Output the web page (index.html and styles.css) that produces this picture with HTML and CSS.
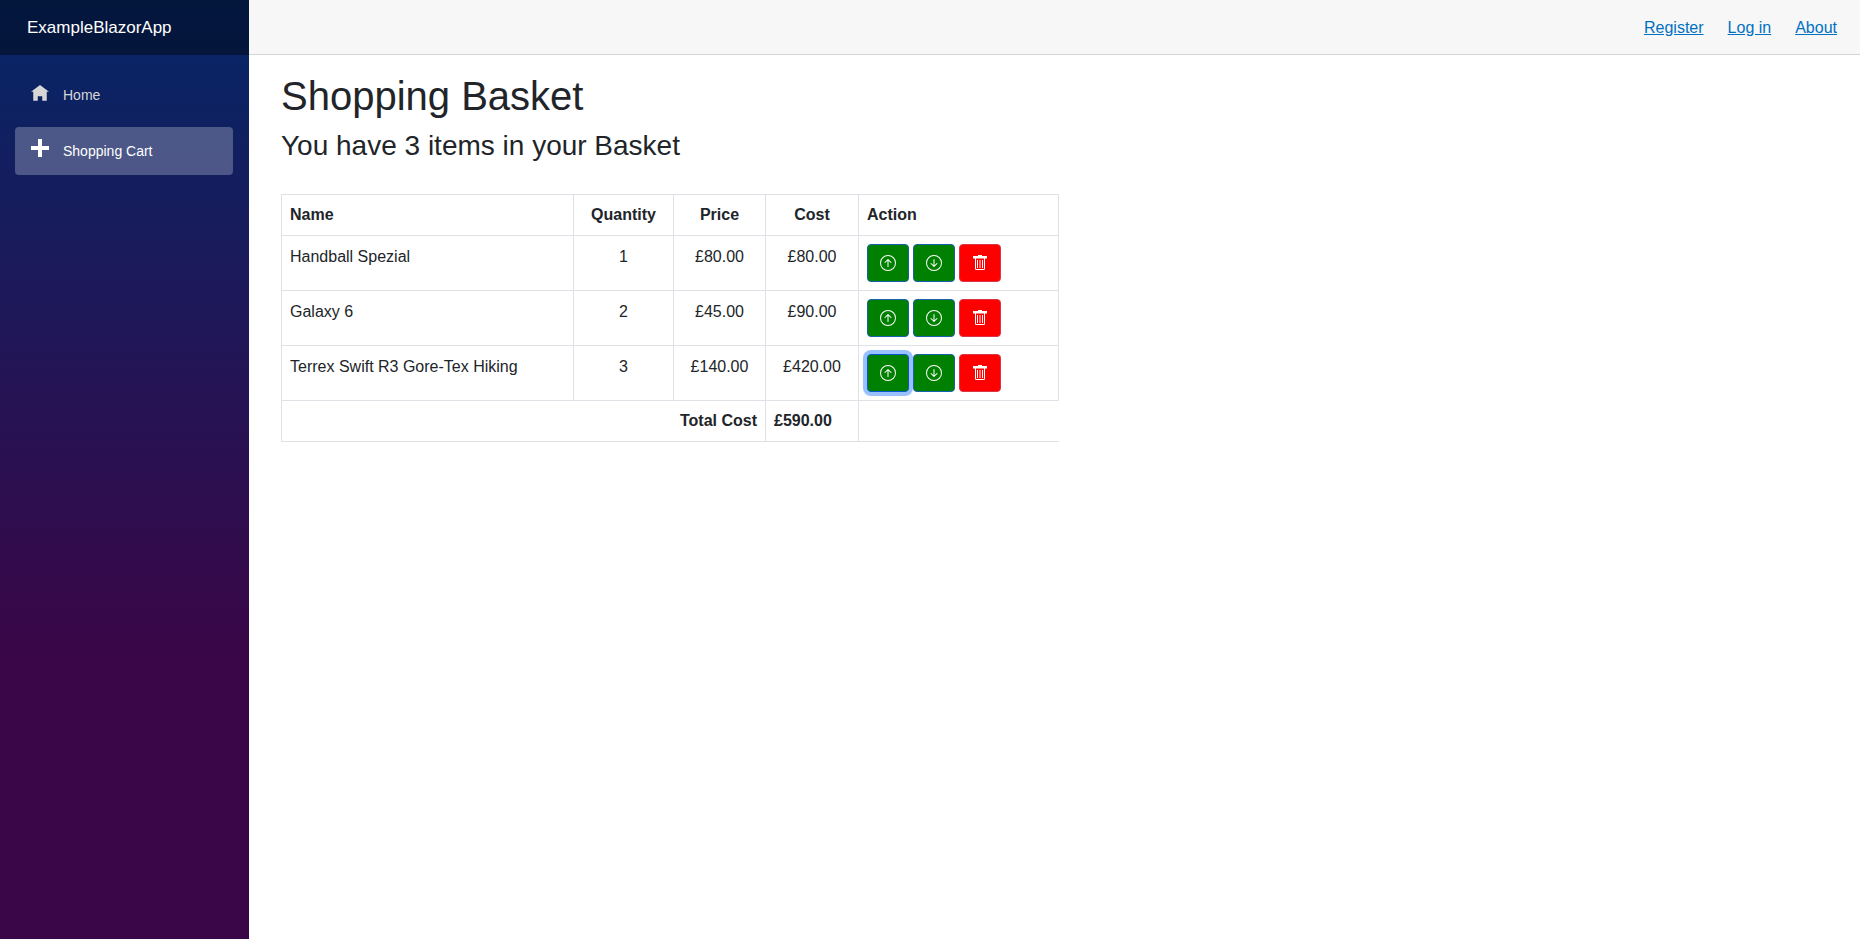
FILE: index.html
```html
<!DOCTYPE html>
<html lang="en">
<head>
<meta charset="utf-8">
<title>Shopping Basket</title>
<link rel="stylesheet" href="styles.css">
</head>
<body>
<svg class="sprite" aria-hidden="true">
  <symbol id="up" viewBox="0 0 16 16"><path fill-rule="evenodd" d="M1 8a7 7 0 1 0 14 0A7 7 0 0 0 1 8m15 0A8 8 0 1 1 0 8a8 8 0 0 1 16 0m-7.500 3.500a.5.5 0 0 1-1 0V5.707L5.354 7.854a.5.5 0 1 1-.708-.708l3-3a.5.5 0 0 1 .708 0l3 3a.5.5 0 0 1-.708.708L8.500 5.707z"/></symbol>
  <symbol id="down" viewBox="0 0 16 16"><path fill-rule="evenodd" d="M1 8a7 7 0 1 0 14 0A7 7 0 0 0 1 8m15 0A8 8 0 1 1 0 8a8 8 0 0 1 16 0M8.500 4.500a.5.5 0 0 0-1 0v5.793L5.354 8.146a.5.5 0 1 0-.708.708l3 3a.5.5 0 0 0 .708 0l3-3a.5.5 0 0 0-.708-.708L8.500 10.293z"/></symbol>
  <symbol id="trash" viewBox="0 0 16 16"><path d="M6 0h4v1h5v2.500H13V13.500A1.500 1.500 0 0 1 11.500 15H4.500A1.500 1.500 0 0 1 3 13.500V3.500H1V1h5zM4 3.500v10q0 .5.500.5h7q.5 0 .5-.5v-10z"/><path d="M5 5h1v8H5zM7.500 5h1v8h-1zM10 5h1v8h-1z"/></symbol>
</svg>
<div class="page">
  <aside class="sidebar">
    <div class="brand"><a href="#">ExampleBlazorApp</a></div>
    <nav class="nav">
      <a class="nav-link" href="#"><svg class="nav-icon" viewBox="0 0 8 8"><path d="M4 .9 0 3.900h1v4h2v-2h2v2h2v-4h1z"/></svg>Home</a>
      <a class="nav-link active" href="#"><svg class="nav-icon" viewBox="0 0 18 18"><path d="M7 0h4v7h7v4h-7v7H7v-7H0V7h7z"/></svg>Shopping Cart</a>
    </nav>
  </aside>
  <main class="main">
    <div class="top-row"><a href="#">Register</a><a href="#">Log in</a><a href="#">About</a></div>
    <article class="content">
      <h1>Shopping Basket</h1>
      <h3>You have 3 items in your Basket</h3>
      <table class="basket">
        <colgroup><col class="col-name"><col class="col-qty"><col class="col-price"><col class="col-cost"><col class="col-action"></colgroup>
        <thead>
          <tr><th>Name</th><th class="center">Quantity</th><th class="center">Price</th><th class="center">Cost</th><th>Action</th></tr>
        </thead>
        <tbody>
          <tr><td>Handball Spezial</td><td class="center">1</td><td class="center">£80.00</td><td class="center">£80.00</td>
            <td><div class="actions"><button class="btn" aria-label="Increase"><svg><use href="#up"/></svg></button><button class="btn" aria-label="Decrease"><svg><use href="#down"/></svg></button><button class="btn danger" aria-label="Delete"><svg><use href="#trash"/></svg></button></div></td></tr>
          <tr><td>Galaxy 6</td><td class="center">2</td><td class="center">£45.00</td><td class="center">£90.00</td>
            <td><div class="actions"><button class="btn" aria-label="Increase"><svg><use href="#up"/></svg></button><button class="btn" aria-label="Decrease"><svg><use href="#down"/></svg></button><button class="btn danger" aria-label="Delete"><svg><use href="#trash"/></svg></button></div></td></tr>
          <tr><td>Terrex Swift R3 Gore-Tex Hiking</td><td class="center">3</td><td class="center">£140.00</td><td class="center">£420.00</td>
            <td><div class="actions"><button class="btn focused" aria-label="Increase"><svg><use href="#up"/></svg></button><button class="btn" aria-label="Decrease"><svg><use href="#down"/></svg></button><button class="btn danger" aria-label="Delete"><svg><use href="#trash"/></svg></button></div></td></tr>
        </tbody>
        <tfoot>
          <tr><th class="right" colspan="3">Total Cost</th><th>£590.00</th><td class="open"></td></tr>
        </tfoot>
      </table>
    </article>
  </main>
</div>
</body>
</html>
```
FILE: styles.css
```css
* { box-sizing: border-box; }
body {
  margin: 0;
  font: 16px/24px "Liberation Sans", Arial, sans-serif;
  color: #212529;
  background: #fff;
}
.sprite { display: none; }
.page { display: flex; min-height: 100vh; }
.sidebar {
  flex: 0 0 249px;
  background: linear-gradient(180deg, rgb(5, 39, 103) 0%, #3a0647 70%);
}
.brand {
  height: 55px;
  padding: 0 27px;
  display: flex;
  align-items: center;
  background: rgba(0, 0, 0, 0.4);
}
.brand a { color: #fff; font-size: 17px; text-decoration: none; }
.nav { display: flex; flex-direction: column; gap: 8px; padding: 16px 16px 16px 15px; }
.nav-link {
  height: 48px;
  padding: 0 16px;
  display: flex;
  align-items: center;
  gap: 14px;
  border-radius: 4px;
  color: #d7d7d7;
  font-size: 14px;
  line-height: 48px;
  text-decoration: none;
}
.nav-link.active { background: rgba(255, 255, 255, 0.25); color: #fff; }
.nav-icon { width: 18px; height: 18px; margin-bottom: 6px; fill: currentColor; }
.main { flex: 1; min-width: 0; }
.top-row {
  height: 55px;
  padding: 2px 23px 0;
  display: flex;
  justify-content: flex-end;
  align-items: center;
  gap: 24px;
  background: #f7f7f7;
  border-bottom: 1px solid #d6d5d5;
}
.top-row a { color: #0071c1; text-decoration: underline; }
.content { padding: 17px 24px 24px 32px; }
h1, h3 { margin: 0 0 8px; font-weight: 400; }
h1 { font-size: 40px; line-height: 48px; }
h3 { font-size: 28px; line-height: 36px; }
.basket {
  width: 778px;
  margin-top: 30px;
  table-layout: fixed;
  border-collapse: collapse;
}
.col-name { width: 292px; }
.col-qty { width: 100px; }
.col-price { width: 92px; }
.col-cost { width: 93px; }
th, td { padding: 8px; border: 1px solid #dee2e6; text-align: left; vertical-align: top; }
td { line-height: 26px; }
.center { text-align: center; }
.right { text-align: right; }
.open { border-right: 0; }
.actions { display: flex; gap: 4px; }
.btn {
  width: 42px;
  height: 38px;
  padding: 0;
  display: flex;
  align-items: center;
  justify-content: center;
  color: #fff;
  background: #008000;
  border: 1px solid #1861ac;
  border-radius: 4px;
}
.btn svg { width: 16px; height: 16px; fill: currentColor; }
.danger { background: #f00; border-color: #dc3545; }
.focused { border-color: #0a58ca; box-shadow: 0 0 0 4px #98c1fe; }
```
